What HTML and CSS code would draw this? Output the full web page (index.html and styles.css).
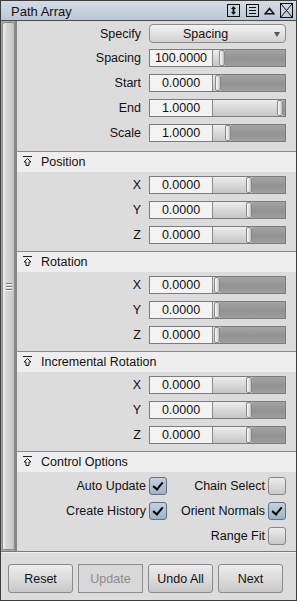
FILE: index.html
```html
<!DOCTYPE html>
<html lang="en">
<head>
  <meta charset="UTF-8" />
  <title>Path Array</title>
  <link rel="stylesheet" href="styles.css">
</head>
<body>
  <div class="window">
    <header class="titlebar">
      <span class="title">Path Array</span>
      <div class="tools">
        <svg width="13" height="13" viewBox="0 0 13 13"><rect x="0.5" y="0.5" width="12" height="12" fill="none" stroke="#111"/><path d="M6.5 2 L9 5 H4 Z M6.5 11 L9 8 H4 Z" fill="#111"/><rect x="5.5" y="4" width="2" height="5" fill="#111"/></svg>
        <svg width="13" height="13" viewBox="0 0 13 13"><rect x="0.5" y="0.5" width="12" height="12" fill="none" stroke="#111"/><path d="M3 3.5 H10 M3 6.5 H10 M3 9.5 H10" stroke="#111"/></svg>
        <svg class="tri" width="11" height="8" viewBox="0 0 11 8"><path d="M1.2 6.8 L5.5 1.5 L9.8 6.8 Z" fill="none" stroke="#111" stroke-width="1.5" stroke-linejoin="miter"/></svg>
        <svg width="13" height="15" viewBox="0 0 13 15"><rect x="0.5" y="0.5" width="12" height="14" fill="none" stroke="#111"/><path d="M1 1 L12 14 M12 1 L1 14" stroke="#111"/></svg>
      </div>
    </header>

    <div class="body">
      <div class="strip">
        <div class="bar">
          <div class="grip"><i></i><i></i><i></i></div>
        </div>
      </div>

      <div class="content">
        <div class="section first">
          <div class="row">
            <label>Specify</label>
            <div class="dropdown">Spacing<span class="arrow"></span></div>
          </div>
          <div class="row">
            <label>Spacing</label>
            <div class="numfield"><span class="val">100.0000</span><div class="slider"><div class="fill" style="width:6px"></div><div class="thumb"></div><div class="rest"></div></div></div>
          </div>
          <div class="row">
            <label>Start</label>
            <div class="numfield"><span class="val">0.0000</span><div class="slider"><div class="fill" style="width:2px"></div><div class="thumb"></div><div class="rest"></div></div></div>
          </div>
          <div class="row">
            <label>End</label>
            <div class="numfield"><span class="val">1.0000</span><div class="slider"><div class="fill" style="width:64px"></div><div class="thumb"></div><div class="rest"></div></div></div>
          </div>
          <div class="row">
            <label>Scale</label>
            <div class="numfield"><span class="val">1.0000</span><div class="slider"><div class="fill" style="width:12px"></div><div class="thumb"></div><div class="rest"></div></div></div>
          </div>
        </div>

        <div class="section">
          <div class="sec-head"><svg width="9" height="10" viewBox="0 0 9 10"><path d="M0 0.5 H9 M4.5 2.5 L8 6 H6 V9.5 H3 V6 H1 Z" fill="none" stroke="#222"/></svg>Position</div>
          <div class="sec-body">
            <div class="row"><label>X</label><div class="numfield"><span class="val">0.0000</span><div class="slider"><div class="fill" style="width:33px"></div><div class="thumb"></div><div class="rest"></div></div></div></div>
            <div class="row"><label>Y</label><div class="numfield"><span class="val">0.0000</span><div class="slider"><div class="fill" style="width:33px"></div><div class="thumb"></div><div class="rest"></div></div></div></div>
            <div class="row"><label>Z</label><div class="numfield"><span class="val">0.0000</span><div class="slider"><div class="fill" style="width:33px"></div><div class="thumb"></div><div class="rest"></div></div></div></div>
          </div>
        </div>

        <div class="section">
          <div class="sec-head"><svg width="9" height="10" viewBox="0 0 9 10"><path d="M0 0.5 H9 M4.5 2.5 L8 6 H6 V9.5 H3 V6 H1 Z" fill="none" stroke="#222"/></svg>Rotation</div>
          <div class="sec-body">
            <div class="row"><label>X</label><div class="numfield"><span class="val">0.0000</span><div class="slider"><div class="fill" style="width:1px"></div><div class="thumb"></div><div class="rest"></div></div></div></div>
            <div class="row"><label>Y</label><div class="numfield"><span class="val">0.0000</span><div class="slider"><div class="fill" style="width:1px"></div><div class="thumb"></div><div class="rest"></div></div></div></div>
            <div class="row"><label>Z</label><div class="numfield"><span class="val">0.0000</span><div class="slider"><div class="fill" style="width:1px"></div><div class="thumb"></div><div class="rest"></div></div></div></div>
          </div>
        </div>

        <div class="section">
          <div class="sec-head"><svg width="9" height="10" viewBox="0 0 9 10"><path d="M0 0.5 H9 M4.5 2.5 L8 6 H6 V9.5 H3 V6 H1 Z" fill="none" stroke="#222"/></svg>Incremental Rotation</div>
          <div class="sec-body">
            <div class="row"><label>X</label><div class="numfield"><span class="val">0.0000</span><div class="slider"><div class="fill" style="width:33px"></div><div class="thumb"></div><div class="rest"></div></div></div></div>
            <div class="row"><label>Y</label><div class="numfield"><span class="val">0.0000</span><div class="slider"><div class="fill" style="width:33px"></div><div class="thumb"></div><div class="rest"></div></div></div></div>
            <div class="row"><label>Z</label><div class="numfield"><span class="val">0.0000</span><div class="slider"><div class="fill" style="width:33px"></div><div class="thumb"></div><div class="rest"></div></div></div></div>
          </div>
        </div>

        <div class="section last">
          <div class="sec-head"><svg width="9" height="10" viewBox="0 0 9 10"><path d="M0 0.5 H9 M4.5 2.5 L8 6 H6 V9.5 H3 V6 H1 Z" fill="none" stroke="#222"/></svg>Control Options</div>
          <div class="options">
            <div class="opt">Auto Update<span class="check on"></span></div>
            <div class="opt">Chain Select<span class="check"></span></div>
            <div class="opt">Create History<span class="check on"></span></div>
            <div class="opt">Orient Normals<span class="check on"></span></div>
            <div class="opt"></div>
            <div class="opt">Range Fit<span class="check"></span></div>
          </div>
        </div>
      </div>
    </div>

    <footer class="footer">
      <button class="btn">Reset</button>
      <button class="btn disabled">Update</button>
      <button class="btn">Undo All</button>
      <button class="btn">Next</button>
    </footer>
  </div>
</body>
</html>
```

FILE: styles.css
```css
:root {
  --panel-bg: #dcdcdc;
  --head-bg: #eeeeee;
  --line: #8a8a8a;
  --text: #111;
}

* {
  box-sizing: border-box;
}

body {
  margin: 0;
  font-family: "Liberation Sans", Arial, sans-serif;
  font-size: 12.5px;
  color: var(--text);
}

.window {
  width: 297px;
  height: 601px;
  border: 1px solid #3e3e3e;
  background: var(--panel-bg);
  display: flex;
  flex-direction: column;
}

/* title bar */
.titlebar {
  height: 20px;
  border-bottom: 1px solid #4a4a4a;
  background: linear-gradient(to bottom, #d3dce6, #bcc8d4);
  display: flex;
  align-items: center;
  padding: 0 3px 0 10px;
}

.title {
  flex: 1;
  font-size: 13px;
  padding-top: 1px;
}

.tools {
  display: flex;
  align-items: center;
  gap: 6px;
}

.tools svg {
  display: block;
}

.tools .tri {
  margin: 0 -1px;
}

/* body */
.body {
  flex: 1;
  display: flex;
  min-height: 0;
}

.strip {
  width: 16px;
  background: #a6a6a6;
  border-right: 2px solid #858585;
  padding: 1px 0 1px 1px;
  display: flex;
}

.bar {
  flex: 1;
  border: 1px solid #8e8e8e;
  border-radius: 3px 3px 0 0;
  background: linear-gradient(to right, #eeeeee, #d4d4d4 35%, #cdcdcd 80%, #bcbcbc);
  display: flex;
  align-items: center;
  justify-content: center;
}

.grip {
  display: flex;
  flex-direction: column;
  gap: 2px;
}

.grip i {
  display: block;
  width: 6px;
  height: 1px;
  background: #7a7a7a;
  box-shadow: 0 1px 0 #f4f4f4;
}

.content {
  flex: 1;
  display: flex;
  flex-direction: column;
}

.section {
  border-top: 1px solid var(--line);
}

.section.first {
  border-top: none;
  padding: 3px 0 9px;
  display: flex;
  flex-direction: column;
  gap: 7px;
}

.section.first .row:first-child {
  margin-bottom: -1px;
}

.section.last {
  flex: 1;
}

.sec-head {
  height: 20px;
  background: var(--head-bg);
  display: flex;
  align-items: center;
  gap: 9px;
  padding-left: 6px;
}

.sec-head svg {
  display: block;
  margin-top: -3px;
}

.sec-body {
  padding: 4px 0 7px;
  display: flex;
  flex-direction: column;
  gap: 7px;
}

.row {
  display: flex;
  align-items: center;
}

.row label {
  width: 124px;
  margin-right: 8px;
  text-align: right;
}

/* option menu */
.dropdown {
  width: 137px;
  height: 19px;
  border: 1px solid #8a8a8a;
  border-radius: 4px;
  background: linear-gradient(to bottom, #f3f3f3, #d2d2d2);
  display: flex;
  align-items: center;
  justify-content: center;
  padding-right: 24px;
  position: relative;
}

.arrow {
  position: absolute;
  right: 5px;
  top: 7px;
  width: 0;
  height: 0;
  border-left: 3px solid transparent;
  border-right: 3px solid transparent;
  border-top: 5px solid #555;
}

/* float field with slider */
.numfield {
  width: 137px;
  height: 18px;
  border: 1px solid #7c7c7c;
  display: flex;
}

.val {
  width: 63px;
  background: #f3f3f3;
  border-right: 1px solid #8a8a8a;
  display: flex;
  align-items: center;
  justify-content: center;
}

.slider {
  flex: 1;
  display: flex;
}

.fill {
  background: linear-gradient(to bottom, #ececec, #c6c6c6);
}

.thumb {
  width: 6px;
  border: 1px solid #8a8a8a;
  border-radius: 2px;
  background: linear-gradient(to right, #fafafa, #dcdcdc 60%, #b8b8b8);
}

.rest {
  flex: 1;
  background: linear-gradient(to bottom, #a4a4a4, #929292 55%, #9e9e9e);
}

/* check boxes */
.options {
  display: grid;
  grid-template-columns: 150px 119px;
  row-gap: 7px;
  padding-top: 5px;
}

.opt {
  height: 18px;
  display: flex;
  align-items: center;
  justify-content: flex-end;
  gap: 3px;
}

.check {
  width: 18px;
  height: 18px;
  border: 1px solid #858585;
  border-radius: 3px;
  background: linear-gradient(to bottom, #ececec, #c8c8c8);
  position: relative;
}

.check.on {
  border-color: #5f7080;
  background: linear-gradient(to bottom, #c4d2de, #9fb2c4);
}

.check.on::after {
  content: "";
  position: absolute;
  left: 5px;
  top: 2px;
  width: 4px;
  height: 8px;
  border-right: 2px solid #000;
  border-bottom: 2px solid #000;
  transform: rotate(40deg);
}

/* buttons */
.footer {
  height: 49px;
  border-top: 1px solid #7a7a7a;
  box-shadow: inset 0 1px 0 #f2f2f2;
  padding: 12px 0 0 7px;
  display: flex;
  gap: 5px;
  align-items: flex-start;
}

.btn {
  width: 65px;
  height: 29px;
  border: 1px solid #8a8a8a;
  border-radius: 3px;
  background: linear-gradient(to bottom, #ececec, #dcdcdc 50%, #c8c8c8);
  font-family: "Liberation Sans", Arial, sans-serif;
  font-size: 12.5px;
  color: var(--text);
  padding: 0;
}

.btn.disabled {
  border-color: #8e8e8e;
  border-radius: 0;
  background: #d8d8d8;
  color: #8c8c8c;
}
```
